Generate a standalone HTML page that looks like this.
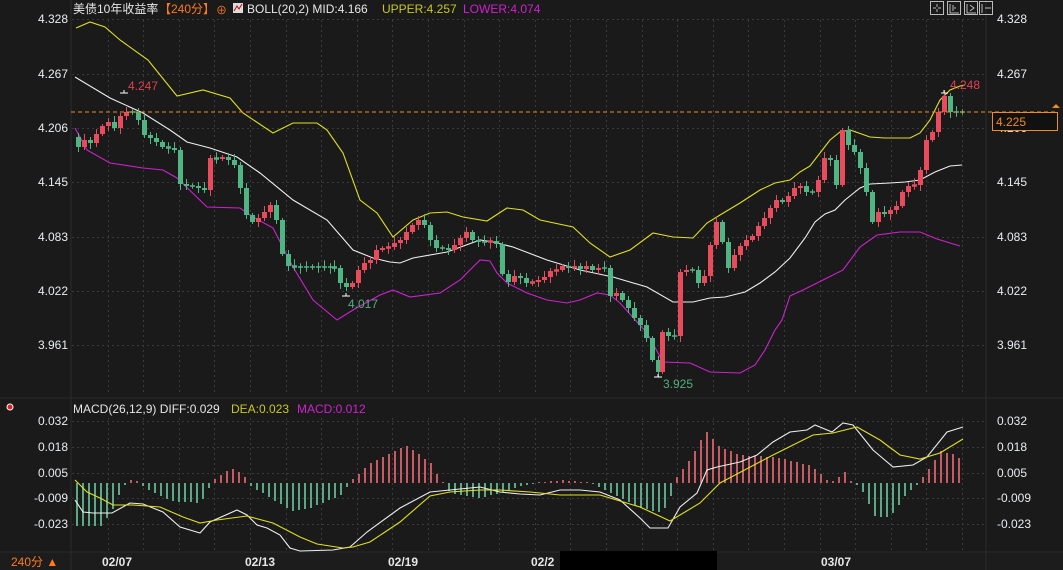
<!DOCTYPE html>
<html><head><meta charset="utf-8">
<style>
html,body{margin:0;padding:0;background:#1a1a1a;width:1063px;height:570px;overflow:hidden}
svg{display:block;font-family:"Liberation Sans","Noto Sans CJK SC",sans-serif}
</style></head>
<body>
<svg id="c" width="1063" height="570" xmlns="http://www.w3.org/2000/svg">
<rect width="1063" height="570" fill="#1a1a1a"/>
<rect x="0" y="552" width="1063" height="18" fill="#1c1c1c"/>
<g id="grid" stroke="#3a3a3a" stroke-dasharray="2,3" stroke-width="1"></g>
<line x1="71" y1="0" x2="71" y2="570" stroke="#2c2c2c"/>
<line x1="986" y1="0" x2="986" y2="570" stroke="#2c2c2c"/>
<line x1="0" y1="398" x2="1063" y2="398" stroke="#2a2a2a"/>
<line x1="0" y1="552" x2="1063" y2="552" stroke="#2a2a2a"/>
<g id="bars"></g>
<g id="lines" fill="none" stroke-width="1.1"></g>
<g id="candles"></g>
<line x1="71" y1="112" x2="1058" y2="112" stroke="#f08a24" stroke-dasharray="4,3" stroke-width="1"/>
<text x="73" y="13" font-size="12" fill="#e6e6e6">美债10年收益率</text>
<text x="159" y="13" font-size="12" fill="#ff7a1a">【240分】</text>
<text x="216" y="14" font-size="11" fill="#ff7a1a">⊕</text>
<rect x="233" y="3" width="10" height="10" fill="#ddd"/>
<polyline points="234,11 237,6 239,9 242,4" stroke="#c00" fill="none"/>
<text x="247" y="13" font-size="12" fill="#e6e6e6">BOLL(20,2) MID:4.166</text>
<text x="382" y="13" font-size="12" fill="#c8c820">UPPER:4.257</text>
<text x="463" y="13" font-size="12" fill="#d020d0">LOWER:4.074</text>
<g stroke="#bbb" fill="none">
<rect x="930.5" y="1.5" width="13" height="13"/><rect x="947.5" y="1.5" width="13" height="13"/><rect x="964.5" y="1.5" width="13" height="13"/><rect x="979.5" y="1.5" width="13" height="13"/>
<path d="M937 4v3M937 9v3M933 8h3M938 8h3M950 4v9h9M953 5v6M956 8h-2M967 4v9h9M970 5l4 3-4 3M982 4v9M985 8h6"/>
</g>
<g font-size="12" fill="#e8ecf0">
<text x="68" y="23" text-anchor="end">4.328</text><text x="68" y="78" text-anchor="end">4.267</text><text x="68" y="132" text-anchor="end">4.206</text><text x="68" y="186" text-anchor="end">4.145</text><text x="68" y="241" text-anchor="end">4.083</text><text x="68" y="295" text-anchor="end">4.022</text><text x="68" y="349" text-anchor="end">3.961</text>
<text x="997" y="23">4.328</text><text x="997" y="78">4.267</text><text x="997" y="132">4.206</text><text x="997" y="186">4.145</text><text x="997" y="241">4.083</text><text x="997" y="295">4.022</text><text x="997" y="349">3.961</text>
<text x="68" y="425" text-anchor="end">0.032</text><text x="68" y="451" text-anchor="end">0.018</text><text x="68" y="477" text-anchor="end">0.005</text><text x="68" y="502" text-anchor="end">-0.009</text><text x="68" y="528" text-anchor="end">-0.023</text>
<text x="997" y="425">0.032</text><text x="997" y="451">0.018</text><text x="997" y="477">0.005</text><text x="997" y="502">-0.009</text><text x="997" y="528">-0.023</text>
</g>
<rect x="992.5" y="112.5" width="65" height="18" fill="#111" stroke="#f08a24"/>
<text x="996" y="126" font-size="12" fill="#f08a24">4.225</text>
<path d="M1052 108l4-4 4 4z" fill="#f08a24"/>
<text x="128" y="90" font-size="12" fill="#e04050">4.247</text>
<text x="950" y="89" font-size="12" fill="#e04050">4.248</text>
<text x="348" y="308" font-size="12" fill="#50b080">4.017</text>
<text x="663" y="388" font-size="12" fill="#50b080">3.925</text>
<g stroke="#fff"><path d="M120 93h8M124 93v-3M941 93h7M944 93v-3M342 296h8M346 296v-3M654 377h8M658 377v-3"/></g>
<circle cx="10" cy="407" r="3" fill="#e02020" stroke="#fff" stroke-width="1"/>
<text x="73" y="413" font-size="12" fill="#e6e6e6">MACD(26,12,9) DIFF:0.029</text>
<text x="231" y="413" font-size="12" fill="#c8c820">DEA:0.023</text>
<text x="297" y="413" font-size="12" fill="#d020d0">MACD:0.012</text>
<text x="11" y="566" font-size="12" fill="#ff7a1a">240分 ▲</text>
<g font-size="12" fill="#e6e6e6" font-weight="bold">
<text x="102" y="566">02/07</text><text x="245" y="566">02/13</text><text x="388" y="566">02/19</text><text x="531" y="566">02/2</text><text x="821" y="566">03/07</text>
</g>
<rect x="560" y="551" width="157" height="19" fill="#000"/>
</svg>
<script>
var NS="http://www.w3.org/2000/svg";
function el(p,t,a){var e=document.createElementNS(NS,t);for(var k in a)e.setAttribute(k,a[k]);document.getElementById(p).appendChild(e);return e;}
[19,74,128,182,237,291,345,421,447,473,498,524].forEach(function(y){el("grid","line",{x1:72,y1:y+.5,x2:985,y2:y+.5});});
for(var gx=107.6;gx<985;gx+=35.6){el("grid","line",{x1:Math.round(gx)+.5,y1:20,x2:Math.round(gx)+.5,y2:395});el("grid","line",{x1:Math.round(gx)+.5,y1:418,x2:Math.round(gx)+.5,y2:550});}
function interp(pts,x){for(var i=0;i<pts.length-1;i++){if(x>=pts[i][0]&&x<=pts[i+1][0]){var t=(x-pts[i][0])/(pts[i+1][0]-pts[i][0]);return pts[i][1]+t*(pts[i+1][1]-pts[i][1]);}}return pts[pts.length-1][1];}
var H=[[76,-43],[100,-43],[110,-30],[120,-8],[128,3],[136,2],[145,-5],[170,-18],[200,-20],[207,-7],[213,3],[230,15],[243,8],[250,-3],[270,-15],[290,-28],[310,-25],[340,-12],[350,2],[370,20],[405,38],[430,20],[440,2],[450,-10],[480,-15],[500,-10],[520,-3],[560,3],[590,0],[605,-8],[640,-25],[660,-30],[668,-20],[675,5],[690,25],[705,52],[720,35],[740,28],[780,25],[810,17],[830,0],[845,12],[850,2],[860,-5],[875,-35],[890,-33],[905,-12],[915,-3],[925,10],[940,32],[955,28],[962,22]];
for(var x=76;x<=962;x+=6){var h=Math.round(interp(H,x));if(h==0)h=1;el("bars","rect",{x:x,y:h>0?483-h:483,width:2,height:Math.abs(h),fill:h>0?"#c85a64":"#5aa886"});}
function line(pts,c){el("lines","polyline",{points:pts.map(function(p){return p.join(",")}).join(" "),stroke:c});}
line([[76,28],[90,22],[105,27],[120,40],[148,60],[177,96],[203,90],[230,98],[243,113],[273,133],[293,123],[317,123],[327,130],[343,153],[360,200],[377,213],[393,237],[413,220],[430,213],[447,212],[463,217],[487,221],[507,208],[523,210],[540,220],[573,227],[590,243],[610,257],[630,250],[653,233],[673,237],[693,238],[707,223],[720,215],[740,203],[760,190],[775,183],[790,180],[800,172],[810,166],[820,153],[830,140],[840,132],[850,130],[870,137],[885,138],[910,138],[920,133],[930,120],[940,100],[950,90],[960,86],[965,85]],"#e0e020");
line([[75,77],[110,98],[143,113],[170,130],[187,142],[210,148],[237,157],[260,173],[293,200],[327,220],[353,250],[373,258],[390,262],[400,263],[413,258],[447,252],[480,240],[493,242],[513,247],[547,260],[580,270],[613,277],[647,287],[673,302],[693,302],[710,298],[725,297],[745,292],[760,283],[775,272],[790,258],[805,238],[815,222],[825,214],[835,210],[845,200],[860,188],[870,184],[890,183],[905,182],[920,180],[935,172],[950,166],[962,165]],"#eeeeee");
line([[75,128],[87,150],[110,163],[143,168],[163,170],[177,178],[207,207],[240,208],[253,217],[273,228],[293,267],[313,300],[337,320],[353,310],[380,295],[393,290],[410,297],[440,293],[460,280],[480,260],[490,261],[497,273],[507,283],[527,293],[547,300],[567,303],[580,300],[597,293],[610,295],[620,303],[647,333],[663,362],[690,363],[710,372],[740,373],[755,365],[765,350],[775,330],[782,320],[790,296],[803,290],[823,280],[843,270],[860,247],[877,235],[900,232],[920,232],[937,239],[960,246]],"#d020d0");
line([[75,500],[83,512],[93,513],[112,513],[130,503],[143,504],[163,512],[180,527],[200,533],[210,522],[237,510],[247,515],[257,525],[267,528],[280,535],[290,548],[300,551],[333,550],[350,547],[367,532],[400,508],[430,492],[450,490],[480,487],[500,492],[520,494],[540,495],[560,490],[580,490],[600,492],[620,500],[640,518],[650,528],[668,528],[680,507],[697,493],[707,470],[717,467],[740,462],[757,455],[773,442],[790,432],[807,430],[815,425],[832,432],[843,423],[853,425],[873,450],[893,467],[913,465],[927,457],[947,432],[963,427]],"#eeeeee");
line([[75,480],[87,492],[100,498],[113,505],[133,505],[160,507],[183,517],[200,523],[217,520],[247,516],[273,523],[300,537],[317,544],[343,548],[353,547],[370,542],[400,522],[430,496],[450,492],[480,490],[500,490],[530,492],[560,495],[600,495],[640,507],[670,521],[700,503],[720,483],[773,455],[813,435],[833,433],[857,427],[880,440],[900,455],[920,459],[940,453],[963,439]],"#e0e020");
var C=[[76,147],[82,140],[88,143],[94,134],[100,126],[106,122],[112,128],[118,116],[124,112],[130,112],[136,120],[142,135],[148,138],[154,142],[160,147],[166,148],[172,150],[178,184],[184,186],[190,186],[196,188],[202,190],[208,158],[214,159],[220,157],[226,160],[232,165],[238,188],[244,215],[250,222],[256,218],[262,212],[268,205],[274,220],[280,254],[286,266],[292,267],[298,267],[304,267],[310,267],[316,267],[322,267],[328,267],[332,268],[338,283],[344,287],[350,283],[356,270],[362,263],[368,260],[374,250],[380,248],[386,247],[392,243],[398,240],[404,232],[410,225],[416,220],[422,225],[428,240],[434,248],[440,248],[446,250],[452,245],[458,238],[464,232],[470,240],[476,242],[482,242],[488,241],[494,244],[500,274],[506,282],[512,276],[518,278],[524,283],[530,282],[536,280],[542,277],[548,271],[554,270],[560,266],[566,268],[572,266],[578,269],[584,266],[590,270],[596,268],[602,268],[608,296],[614,293],[620,300],[626,308],[632,318],[638,325],[644,338],[650,360],[656,372],[660,332],[666,336],[672,336],[678,272],[684,270],[690,270],[696,283],[702,276],[708,245],[714,222],[720,242],[726,268],[732,255],[738,246],[744,240],[750,236],[756,226],[762,218],[768,208],[774,200],[780,202],[786,196],[792,188],[798,186],[804,192],[810,192],[816,180],[822,158],[828,160],[834,185],[840,130],[846,145],[852,152],[858,168],[864,192],[870,222],[876,212],[882,214],[888,210],[894,206],[900,192],[906,186],[912,185],[918,170],[924,140],[930,132],[936,112],[942,96],[948,112],[954,112],[960,112]];
var prev=C[0][1]-10;
C.forEach(function(c){var x=c[0],y=c[1],o=prev;var up=y<o;var col=up?"#e84b5c":"#4fb583";var top=Math.min(o,y),bot=Math.max(o,y);if(bot-top<1.5){top-=0.75;bot+=0.75;}
var wt=top-2-((x*7)%5),wb=bot+2+((x*3)%5);
el("candles","line",{x1:x+2.5,y1:wt,x2:x+2.5,y2:wb,stroke:col,"stroke-width":1});
el("candles","rect",{x:x,y:top,width:5,height:bot-top,fill:col});prev=y;});
</script>
</body></html>
